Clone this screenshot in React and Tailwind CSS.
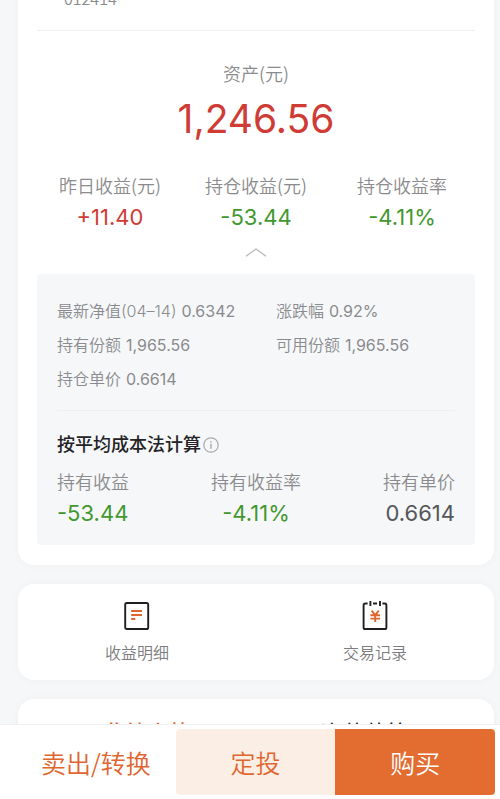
import { useState } from 'react';

const summary = [
  { label: '昨日收益(元)', value: '+11.40', color: 'text-[#cf3c35]' },
  { label: '持仓收益(元)', value: '-53.44', color: 'text-[#43972f]' },
  { label: '持仓收益率', value: '-4.11%', color: 'text-[#43972f]' },
];

const details = [
  { label: '最新净值(04–14)', value: '0.6342' },
  { label: '涨跌幅', value: '0.92%' },
  { label: '持有份额', value: '1,965.56' },
  { label: '可用份额', value: '1,965.56' },
  { label: '持仓单价', value: '0.6614' },
];

const averageCost = [
  { label: '持有收益', value: '-53.44', color: 'text-[#43972f]', align: 'text-left' },
  { label: '持有收益率', value: '-4.11%', color: 'text-[#43972f]', align: 'text-center' },
  { label: '持有单价', value: '0.6614', color: 'text-[#55565a]', align: 'text-right' },
];

const ChevronUp = () => (
  <svg width="22" height="9" viewBox="0 0 22 9" fill="none" stroke="#b4b4b6" strokeWidth="1.2" aria-hidden="true">
    <path d="M1 8.2L11 1l10 7.2" />
  </svg>
);

const InfoIcon = () => (
  <svg width="16" height="16" viewBox="0 0 16 16" fill="none" stroke="#a9aaae" strokeWidth="1.2" aria-hidden="true">
    <circle cx="8" cy="8" r="7.2" />
    <path d="M8 6.8v5M8 4v1.6" strokeWidth="1.4" />
  </svg>
);

const StatementIcon = () => (
  <svg width="26" height="30" viewBox="0 0 26 30" fill="none" aria-hidden="true">
    <rect x="1.2" y="2" width="23" height="26" rx="1.6" stroke="#1f1f21" strokeWidth="1.9" />
    <path d="M7.2 10h10.8M7.2 14h10.8M7.2 18h4" stroke="#e0662f" strokeWidth="1.8" />
  </svg>
);

const RecordIcon = () => (
  <svg width="26" height="30" viewBox="0 0 26 30" fill="none" aria-hidden="true">
    <path
      d="M5.6 2.5H3.2A1.6 1.6 0 0 0 1.6 4.1v22.3A1.6 1.6 0 0 0 3.2 28h19.6a1.6 1.6 0 0 0 1.6-1.6V4.1a1.6 1.6 0 0 0-1.6-1.6h-2.4M11 2.5h4"
      stroke="#1f1f21"
      strokeWidth="1.9"
    />
    <path d="M8.4 0v5M18 0v5" stroke="#1f1f21" strokeWidth="1.9" />
    <path d="M9.6 9.6l3.6 4.6 3.6-4.6M8.4 14.2h9.6M8.4 17.6h9.6M13.2 14v7" stroke="#e0662f" strokeWidth="1.9" />
  </svg>
);

const App = () => {
  const [expanded, setExpanded] = useState(true);
  const [tab, setTab] = useState('performance');

  return (
    <div className="flex h-screen flex-col overflow-hidden bg-[#f6f7f9] font-['Inter','Noto_Sans_CJK_SC',sans-serif]">
      <main className="flex min-h-0 flex-1 flex-col gap-[19px] overflow-hidden pr-1.5 pl-[18px]">
        <section className="-mt-[14px] shrink-0 rounded-b-2xl bg-white px-[19px] pb-5 shadow-[0_0_10px_rgba(0,0,0,0.03)]">
          <p className="pl-[27px] font-['Noto_Sans_CJK_SC',sans-serif] text-base leading-6 font-[350] text-[#8b8b8d]">
            012414
          </p>
          <div className="mt-5 border-t border-[#efeff1]" />

          <div className="mt-7 text-center">
            <h2 className="font-['Noto_Sans_CJK_SC',sans-serif] text-lg leading-7 font-[350] text-[#8b8b8d]">资产(元)</h2>
            <p className="mt-[7px] text-[39px] leading-[50px] text-[#cf3c35]">1,246.56</p>
          </div>

          <dl className="mt-[27px] grid grid-cols-3 text-center">
            {summary.map((item) => (
              <div key={item.label}>
                <dt className="font-['Noto_Sans_CJK_SC',sans-serif] text-lg leading-7 font-[350] text-[#8b8b8d]">
                  {item.label}
                </dt>
                <dd className={`text-[22px] leading-9 ${item.color}`}>{item.value}</dd>
              </div>
            ))}
          </dl>

          <button
            type="button"
            aria-label="收起"
            aria-expanded={expanded}
            onClick={() => setExpanded(!expanded)}
            className="mx-auto mt-[13px] block"
          >
            <ChevronUp />
          </button>

          {expanded && (
            <div className="mt-[17px] rounded bg-[#f6f7f9] px-5 pt-5 pb-[14px]">
              <dl className="grid grid-cols-[11fr_9fr] text-base leading-[34px] text-[#8a8b8e]">
                {details.map((item) => (
                  <div key={item.label} className="flex gap-[5px] whitespace-nowrap">
                    <dt className="font-[350]">{item.label}</dt>
                    <dd>{item.value}</dd>
                  </div>
                ))}
              </dl>

              <div className="mt-[14px] border-t border-[#eeeff1]" />

              <div className="mt-5 flex items-center gap-0.5">
                <h3 className="text-lg leading-7 font-medium text-[#232325]">按平均成本法计算</h3>
                <button type="button" aria-label="计算说明">
                  <InfoIcon />
                </button>
              </div>

              <dl className="mt-2 flex justify-between">
                {averageCost.map((item) => (
                  <div key={item.label} className={item.align}>
                    <dt className="font-['Noto_Sans_CJK_SC',sans-serif] text-lg leading-7 font-[350] text-[#8b8b8d]">
                      {item.label}
                    </dt>
                    <dd className={`text-[22px] leading-9 ${item.color}`}>{item.value}</dd>
                  </div>
                ))}
              </dl>
            </div>
          )}
        </section>

        <nav className="grid shrink-0 grid-cols-2 rounded-2xl bg-white pt-[17px] pb-[14px] font-['Noto_Sans_CJK_SC',sans-serif] text-base font-[350] text-[#7c7c7e] shadow-[0_0_10px_rgba(0,0,0,0.03)]">
          <a href="#income" className="flex flex-col items-center gap-[7px]">
            <StatementIcon />
            <span className="leading-7">收益明细</span>
          </a>
          <a href="#records" className="flex flex-col items-center gap-[7px]">
            <RecordIcon />
            <span className="leading-7">交易记录</span>
          </a>
        </nav>

        <section className="grid shrink-0 grid-cols-2 rounded-t-2xl bg-white px-5 pt-[18px] pb-6 text-[22px] leading-8 shadow-[0_0_10px_rgba(0,0,0,0.03)]">
          <button
            type="button"
            onClick={() => setTab('performance')}
            className={tab === 'performance' ? 'font-medium text-[#e0662f]' : 'text-[#232325]'}
          >
            业绩走势
          </button>
          <button
            type="button"
            onClick={() => setTab('estimate')}
            className={tab === 'estimate' ? 'font-medium text-[#e0662f]' : 'text-[#232325]'}
          >
            净值估算
          </button>
        </section>
      </main>

      <footer className="grid shrink-0 grid-cols-3 border-t border-[#f0f0f2] bg-white pt-1 pr-[5px] pb-1 pl-4 font-['Noto_Sans_CJK_SC',sans-serif] text-[25px] leading-[66px] font-[350]">
        <button type="button" className="whitespace-nowrap text-[#e0662f]">
          卖出/转换
        </button>
        <button type="button" className="rounded-l bg-[#fbeee5] text-[#e0662f]">
          定投
        </button>
        <button type="button" className="rounded-r bg-[#e36c31] text-white">
          购买
        </button>
      </footer>
    </div>
  );
};

export default App;
